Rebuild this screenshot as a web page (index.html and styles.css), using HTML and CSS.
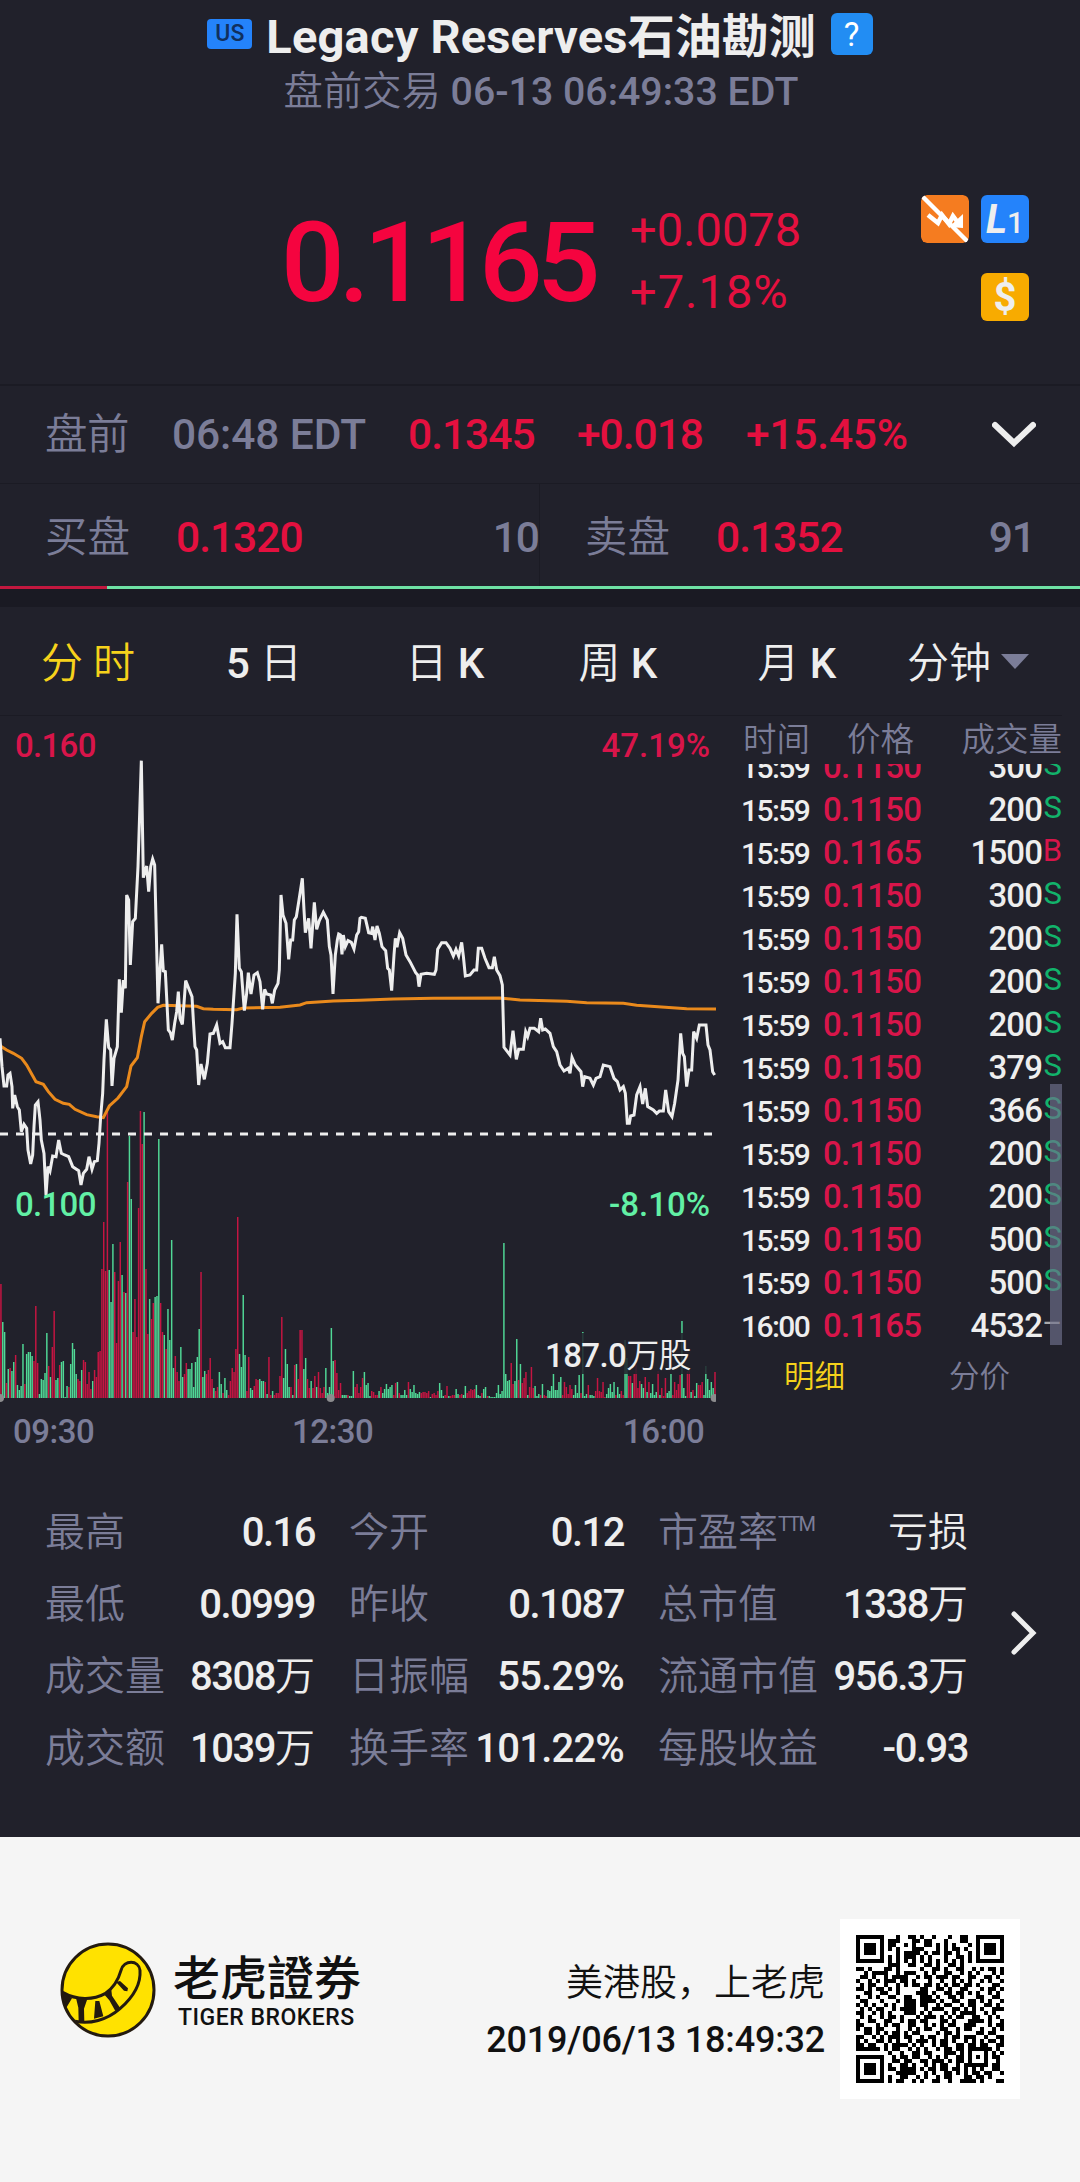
FILE: index.html
```html
<!DOCTYPE html>
<html lang="zh-CN">
<head>
  <meta charset="UTF-8">
  <meta name="viewport" content="width=device-width, initial-scale=1.0">
  <title>Legacy Reserves石油勘测</title>
  <link rel="stylesheet" href="styles.css">
</head>
<body>

  <header class="header">
    <div class="title-row">
      <span class="us-badge">US</span>
      <h1><span class="title-latin">Legacy Reserves</span>石油勘测</h1>
      <span class="help-badge">?</span>
    </div>
    <div class="subtitle"><span class="cn">盘前交易</span> 06-13 06:49:33 EDT</div>
  </header>

  <section class="quote">
    <div class="price">0.1165</div>
    <div class="change">
      <div>+0.0078</div>
      <div class="percent">+7.18%</div>
    </div>
    <div class="icons">
      <svg class="icon" viewBox="0 0 48 48">
        <rect width="48" height="48" rx="6" fill="#f57c20"/>
        <path d="M7 20l10 8 4-8 7 9 4-8 6 8" fill="none" stroke="#fff" stroke-width="4.5"/>
        <path d="M42 33V19L28 32z" fill="#fff"/>
        <path d="M2 2l44 44" stroke="#fff" stroke-width="4.5" stroke-linecap="round"/>
      </svg>
      <div class="icon level"><b>L</b>1</div>
      <div class="icon dollar">$</div>
    </div>
  </section>

  <section class="premarket">
    <span class="cn">盘前</span>
    <span class="clock">06:48 EDT</span>
    <span class="up">0.1345</span>
    <span class="up">+0.018</span>
    <span class="up percent">+15.45%</span>
    <svg class="chevron" viewBox="0 0 44 28"><path d="M3 4l19 18L41 4" fill="none" stroke="#eee" stroke-width="6" stroke-linecap="round"/></svg>
  </section>

  <section class="depth">
    <div class="side">
      <span class="side-label cn">买盘</span>
      <span class="up">0.1320</span>
      <span class="size">10</span>
    </div>
    <div class="side ask">
      <span class="side-label cn">卖盘</span>
      <span class="up">0.1352</span>
      <span class="size">91</span>
    </div>
  </section>
  <div class="ratio"><div class="ratio-bid"></div></div>

  <nav class="tabs cn">
    <span class="active">分 时</span>
    <span><b>5</b> 日</span>
    <span>日 <b>K</b></span>
    <span>周 <b>K</b></span>
    <span>月 <b>K</b></span>
    <span>分钟<i class="caret"></i></span>
  </nav>

  <section class="market">
    <div class="chart">
      <svg class="plot" viewBox="0 24 2148 2070" preserveAspectRatio="none">
        <g id="volumeBars"></g>
        <path class="dash" d="M0 1272H2148"/>
        <polyline class="average" points="0,1006 5,1010 20,1020 40,1030 65,1045 80,1065 108,1115 130,1123 145,1145 165,1168 190,1180 208,1183 225,1198 260,1214 290,1220 310,1223 328,1188 354,1164 380,1130 393,1068 412,1043 424,980 434,935 455,910 473,892 490,886 590,889 610,896 640,898 710,899 730,894 840,892 900,885 920,878 1000,873 1080,871 1180,867 1300,865 1500,864 1560,870 1700,874 1760,878 1870,880 1910,886 2060,896 2148,897"/>
        <polyline class="line" points="0,985 6,1070 12,1128 20,1128 24,1095 30,1090 36,1130 38,1195 44,1155 52,1190 58,1200 64,1265 72,1243 80,1255 84,1320 92,1362 98,1335 102,1250 106,1185 114,1175 120,1230 124,1290 132,1330 138,1455 144,1370 150,1383 158,1338 168,1340 176,1290 184,1330 194,1335 206,1340 218,1370 236,1382 243,1425 250,1390 260,1378 267,1340 276,1378 283,1355 292,1352 297,1300 302,1220 308,1150 312,1050 319,928 326,1012 332,1020 336,1128 342,1045 352,1010 358,808 364,908 370,810 376,835 380,555 386,570 391,765 398,635 406,625 414,470 424,152 430,503 440,468 446,545 452,470 458,447 464,465 474,880 480,780 485,703 490,783 496,785 505,960 511,968 517,990 524,940 530,905 535,845 540,925 547,943 552,880 557,812 564,830 576,860 580,930 585,1010 590,1020 596,1125 603,1062 613,1108 622,1060 630,972 640,970 650,945 660,1000 668,995 676,1013 690,1013 696,940 702,850 706,790 711,613 718,775 724,785 733,902 740,850 745,788 753,852 762,795 772,788 780,815 788,898 794,838 800,852 812,855 817,880 824,840 834,820 838,780 843,555 849,615 858,640 866,748 872,690 878,690 883,630 889,620 897,570 907,505 912,600 916,668 926,625 933,715 943,577 950,658 958,632 970,607 982,630 988,710 993,735 999,852 1006,735 1012,690 1016,672 1021,675 1026,733 1030,675 1036,710 1044,692 1054,697 1062,717 1070,675 1076,665 1080,625 1084,622 1096,625 1106,668 1114,670 1118,650 1125,690 1131,648 1138,670 1146,710 1157,722 1163,775 1168,780 1175,842 1182,735 1186,685 1191,712 1199,668 1208,685 1218,735 1230,755 1247,788 1253,795 1257,830 1263,793 1280,790 1303,793 1308,780 1313,718 1325,698 1338,698 1350,715 1360,738 1368,718 1376,738 1385,697 1390,738 1396,798 1410,795 1422,780 1430,780 1435,715 1445,715 1455,745 1467,773 1477,773 1483,740 1490,780 1500,797 1507,825 1512,1012 1530,1035 1539,962 1549,1048 1556,1018 1570,1018 1577,965 1583,980 1590,955 1603,955 1616,965 1622,925 1628,960 1636,957 1650,970 1660,1010 1670,1025 1680,1065 1692,1083 1705,1075 1710,1090 1716,1042 1726,1065 1743,1085 1748,1130 1754,1100 1770,1105 1780,1125 1788,1105 1800,1100 1810,1065 1830,1070 1842,1105 1852,1115 1860,1140 1870,1130 1876,1150 1882,1240 1888,1240 1892,1218 1902,1215 1910,1155 1920,1130 1928,1182 1936,1135 1943,1190 1960,1200 1970,1210 1978,1203 1990,1203 1997,1140 2006,1205 2016,1220 2024,1180 2034,1110 2042,970 2048,1030 2053,1040 2060,1130 2067,1080 2075,1080 2081,965 2090,985 2098,945 2118,945 2124,1005 2130,1020 2138,1085 2144,1095"/>
        <g fill="#8c8c8e">
          <circle cx="0" cy="2064" r="12"/>
          <circle cx="992" cy="2064" r="12"/>
          <circle cx="2144" cy="2064" r="12"/>
        </g>
      </svg>
      <span class="mark high">0.160</span>
      <span class="mark high right">47.19%</span>
      <span class="mark low">0.100</span>
      <span class="mark low right">-8.10%</span>
      <span class="volume-mark">187.0<span class="cn">万股</span></span>
      <div class="axis"><span>09:30</span><span>12:30</span><span>16:00</span></div>
    </div>

    <div class="trades">
      <div class="trades-head cn"><span>时间</span><span>价格</span><span>成交量</span></div>
      <div class="trades-list">
        <div id="tradeRows"></div>
        <div class="scrollbar"></div>
      </div>
      <div class="trades-tabs cn"><span class="active">明细</span><span>分价</span></div>
    </div>
  </section>

  <section class="stats">
    <dl>
      <div><dt>最高</dt><dd>0.16</dd></div>
      <div><dt>最低</dt><dd>0.0999</dd></div>
      <div><dt>成交量</dt><dd>8308<span class="cn">万</span></dd></div>
      <div><dt>成交额</dt><dd>1039<span class="cn">万</span></dd></div>
    </dl>
    <dl>
      <div><dt>今开</dt><dd>0.12</dd></div>
      <div><dt>昨收</dt><dd>0.1087</dd></div>
      <div><dt>日振幅</dt><dd class="percent">55.29%</dd></div>
      <div><dt>换手率</dt><dd class="percent">101.22%</dd></div>
    </dl>
    <dl>
      <div><dt>市盈率<sup>TTM</sup></dt><dd class="cn">亏损</dd></div>
      <div><dt>总市值</dt><dd>1338<span class="cn">万</span></dd></div>
      <div><dt>流通市值</dt><dd>956.3<span class="cn">万</span></dd></div>
      <div><dt>每股收益</dt><dd>-0.93</dd></div>
    </dl>
    <svg class="more" viewBox="0 0 28 46"><path d="M4 4l19 19L4 42" fill="none" stroke="#eee" stroke-width="5" stroke-linecap="round"/></svg>
  </section>

  <footer class="footer">
    <svg class="logo" viewBox="60 65 288 288">
      <circle cx="204" cy="209" r="138" fill="#ffe200" stroke="#231a10" stroke-width="9"/>
      <path d="M68 216C110 240 160 240 195 220C225 200 236 175 243 150C252 118 296 118 300 150C303 190 280 230 240 265C200 300 150 312 105 303" fill="none" stroke="#231a10" stroke-width="9"/>
      <path d="M66 212L96 234L78 264zM108 233L142 236L132 265L133 306L116 305L115 262zM166 242L178 242L190 288L162 295zM192 222L214 208L216 226L240 262L226 272L208 240zM228 185L240 182L264 204L262 213L252 211z" fill="#231a10"/>
    </svg>
    <div class="brand">
      <div class="brand-cn">老虎證券</div>
      <div class="brand-en">TIGER BROKERS</div>
    </div>
    <div class="slogan">
      <div class="cn">美港股，上老虎</div>
      <div class="date">2019/06/13 18:49:32</div>
    </div>
    <div class="qr"><svg id="qrCode" viewBox="0 0 37 37" shape-rendering="crispEdges"></svg></div>
  </footer>

  <script src="script.js"></script>
</body>
</html>
```
FILE: styles.css
```css
* {
  box-sizing: border-box;
}
body {
  margin: 0;
  width: 1080px;
  background: #21212b;
  color: #eeeeee;
  font-family: Roboto, "Noto Sans CJK SC", sans-serif;
  font-weight: 500;
}
.cn {
  font-family: Roboto, "Noto Sans CJK SC DemiLight", "Noto Sans CJK SC", sans-serif;
  font-weight: 350;
}
.up {
  color: #e4103f;
}
.header {
  height: 108px;
  text-align: center;
}
.title-row {
  height: 74px;
  display: flex;
  justify-content: center;
  align-items: center;
}
h1 {
  margin: 0 15px 0 14px;
  font-size: 47px;
  font-weight: 700;
  line-height: 74px;
  white-space: nowrap;
}
.title-latin {
  letter-spacing: 0.2px;
}
.us-badge {
  width: 45px;
  height: 30px;
  margin-bottom: 6px;
  border-radius: 4px;
  background: #2483fb;
  color: #10305f;
  font-size: 23px;
  line-height: 30px;
}
.help-badge {
  width: 42px;
  height: 42px;
  margin-bottom: 6px;
  border-radius: 6px;
  background: #228df3;
  color: #fff;
  font-size: 33px;
  font-weight: 400;
  line-height: 44px;
}
.subtitle {
  padding-left: 2px;
  font-size: 39.3px;
  line-height: 36px;
  color: #7b7d98;
}
.quote {
  height: 276px;
  padding: 87px 51px 0 281px;
  display: flex;
  align-items: flex-start;
}
.price {
  width: 349px;
  padding-top: 6px;
  font-size: 112px;
  line-height: 124px;
  letter-spacing: -6px;
  color: #f5043f;
}
.change {
  padding-top: 4px;
  font-size: 47px;
  font-weight: 400;
  line-height: 62px;
  color: #e4103f;
}
.change .percent {
  letter-spacing: 1px;
}
.icons {
  width: 108px;
  margin-left: auto;
  display: flex;
  flex-wrap: wrap;
  justify-content: flex-end;
  gap: 30px 12px;
}
.icon {
  width: 48px;
  height: 48px;
  border-radius: 6px;
  line-height: 50px;
  text-align: center;
}
.level {
  background: #2483fb;
  font-size: 30px;
}
.level b {
  font-size: 40px;
  font-style: italic;
}
.dollar {
  background: #f8ab00;
  font-size: 40px;
  font-weight: 700;
}
.premarket {
  height: 99px;
  padding: 0 44px 0 45px;
  border-top: 2px solid #1b1b24;
  display: grid;
  grid-template-columns: 127px 236px 169px 169px 1fr 44px;
  align-items: center;
  font-size: 42.5px;
  line-height: 98px;
  letter-spacing: -0.6px;
  color: #7b7d98;
}
.premarket .clock {
  letter-spacing: -0.1px;
}
.premarket .up,
.depth .up {
  letter-spacing: -1px;
}
.premarket .percent {
  letter-spacing: -0.2px;
}
.chevron {
  width: 44px;
  height: 28px;
}
.depth {
  height: 103px;
  border-top: 1px solid #1b1b24;
  display: grid;
  grid-template-columns: 540px 540px;
  grid-template-rows: 102px;
  font-size: 42.5px;
  line-height: 107px;
  color: #7b7d98;
}
.side {
  padding: 0 0 0 45px;
  display: flex;
  border-right: 1px solid #1b1b24;
}
.ask {
  padding-right: 45px;
  border-right: 0;
}
.side-label {
  width: 131px;
}
.size {
  margin-left: auto;
  letter-spacing: -1px;
}
.ratio {
  height: 21px;
  background: linear-gradient(#6fe2a5 0 3px, #1a1a23 3px);
}
.ratio-bid {
  width: 107px;
  height: 3px;
  background: #c2183f;
}
.tabs {
  width: 1062px;
  height: 109px;
  border-bottom: 1px solid #1b1b24;
  display: grid;
  grid-template-columns: 176px 176px 186px 160px 198px 144px;
  font-size: 42px;
  line-height: 114px;
  text-align: center;
}
.tabs b {
  font-weight: 500;
}
.active {
  color: #f6d21b;
}
.caret {
  display: inline-block;
  margin-left: 10px;
  border: 14px solid transparent;
  border-top: 15px solid #7b7d98;
  border-bottom: 0;
  vertical-align: 9px;
}
.market {
  height: 780px;
  display: flex;
}
.chart {
  width: 716px;
  position: relative;
  padding-top: 2px;
}
.plot {
  display: block;
  width: 716px;
  height: 690px;
}
.line,
.average,
.dash {
  fill: none;
  stroke: #eeeeee;
  stroke-width: 9;
}
.average {
  stroke: #ea8a1c;
}
.dash {
  stroke-dasharray: 24;
}
.mark,
.volume-mark,
.axis {
  font-size: 33px;
  line-height: 40px;
}
.mark {
  position: absolute;
  left: 15px;
  letter-spacing: -0.7px;
}
.mark.right {
  left: auto;
  right: 6px;
  letter-spacing: 0;
}
.high {
  top: 10px;
  color: #d8154a;
}
.low {
  top: 469px;
  color: #62f0a5;
}
.volume-mark {
  position: absolute;
  right: 6px;
  top: 617px;
  width: 170px;
  padding-left: 5px;
  line-height: 46px;
  height: 41px;
  letter-spacing: -0.6px;
  background: rgba(33, 33, 43, 0.85);
}
.axis {
  padding: 4px 0 0 13px;
  display: grid;
  grid-template-columns: 279px 331px 1fr;
  letter-spacing: -0.5px;
  color: #7b7d98;
}
.trades {
  width: 346px;
  padding-left: 26px;
}
.trades-head {
  height: 48px;
  display: grid;
  grid-template-columns: 105px 1fr auto;
  font-size: 33.5px;
  line-height: 48px;
  color: #7b7d98;
}
.trades-head span:first-child {
  padding-left: 1px;
}
.trades-list {
  height: 581px;
  position: relative;
  display: flex;
  align-items: flex-end;
  overflow: hidden;
}
.trade {
  width: 320px;
  height: 43px;
  display: grid;
  grid-template-columns: 81px 105px 1fr 20px;
  font-size: 33px;
  line-height: 48px;
}
.trade .time {
  margin-left: -1px;
  font-size: 30px;
  line-height: 49px;
  letter-spacing: -1.6px;
}
.trade .trade-price {
  color: #d8154a;
  letter-spacing: -0.8px;
}
.trade .amount {
  text-align: right;
  letter-spacing: -0.9px;
}
.trade .flag {
  font-size: 31px;
  font-weight: 400;
  line-height: 44px;
  text-align: right;
  color: #12b36b;
}
.trade .buy {
  color: #d8154a;
}
.trade .none {
  color: #aaaaaa;
}
.scrollbar {
  position: absolute;
  right: 0;
  bottom: 0;
  width: 12px;
  height: 261px;
  background: rgba(112, 114, 142, 0.65);
}
.trades-tabs {
  padding: 0 52px 0 42px;
  display: flex;
  justify-content: space-between;
  font-size: 30.5px;
  line-height: 64px;
  color: #7b7d98;
}
.trades-tabs .active {
  color: #f6d21b;
}
.stats {
  height: 341px;
  padding: 1px 0 0 45px;
  display: grid;
  grid-template-columns: 270px 275px 310px 28px;
  column-gap: 34px;
  font-size: 40px;
  line-height: 72px;
}
.stats dl {
  margin: 0;
}
.stats dl > div {
  display: flex;
  justify-content: space-between;
  white-space: nowrap;
}
.stats dt {
  font-family: Roboto, "Noto Sans CJK SC DemiLight", "Noto Sans CJK SC", sans-serif;
  font-weight: 350;
  color: #7b7d98;
}
.stats dd {
  margin: 0;
  letter-spacing: -1.5px;
}
.stats .percent {
  letter-spacing: -0.8px;
}
.stats dd.cn,
.stats dd .cn {
  font-weight: 400;
  letter-spacing: 0;
}
.stats sup {
  font-size: 20px;
  font-weight: 400;
  letter-spacing: -1.8px;
  line-height: 0;
  vertical-align: 15px;
}
.more {
  width: 28px;
  height: 46px;
  margin: 113px 0 0 8px;
}
.footer {
  height: 345px;
  padding: 82px 60px 0 60px;
  display: flex;
  background: #f5f5f5;
  color: #111;
}
.logo {
  width: 96px;
  height: 96px;
  margin-top: 23px;
}
.brand {
  margin: 29px 0 0 17px;
}
.brand-cn {
  font-family: "Noto Sans CJK TC", sans-serif;
  font-size: 47px;
  line-height: 54px;
}
.brand-en {
  padding-left: 5px;
  font-size: 23px;
  line-height: 31px;
  letter-spacing: 0.5px;
}
.slogan {
  margin: 36px 15px 0 auto;
  font-size: 37px;
  line-height: 57px;
  text-align: right;
}
.date {
  font-size: 36px;
  letter-spacing: -0.2px;
}
.qr {
  width: 180px;
  height: 180px;
  padding: 16px;
  background: #fff;
}
.qr svg {
  display: block;
}
```
FILE: script.js
```js
// One entry per minute: r = up, g = down, then the bar height
const volume = `r114 g76 g66 r15 g29 r30 g27 g36 r43 g13 g8 g12 g54 r14 g44 g46 g46 g42 r37 r92
r35 g4 g19 g18 g25 g65 r32 g21 r51 r87 g18 g20 r33 g36 g37 g1 g12 r11 g34 g55
g49 g24 r19 r17 g28 r38 r36 r14 r26 r9 g17 r28 r21 r46 r47 r129 r176 r127 r286 g128
g96 g154 r126 r55 r117 r156 g123 r106 g105 r216 g262 g199 r66 r99 r61 r190 r287 r254 g286 r129
r64 g99 r79 r95 g101 g102 g259 r95 r66 g63 r49 g89 g58 g158 g30 r42 r26 r17 g51 g21
r24 r35 g29 g29 g35 g11 g36 g41 g69 r126 g21 g27 r24 r28 r40 r19 g10 r7 r11 g26
g14 r5 g20 g8 r3 r17 r30 r26 r49 r181 g44 g31 g103 g43 r7 r41 g10 g8 r12 r19
r18 g19 g17 g17 r16 g4 r41 r3 g7 r3 r5 r5 r22 r81 g20 g49 g34 g11 r11 g3
r33 g34 r19 r68 r68 g29 g40 r19 r10 g17 r10 r22 g11 r26 r10 r5 r11 g30 g5 g11
g70 g37 r38 r25 r8 r15 g3 g3 g3 r3 g2 g2 g27 r11 r14 r5 r11 r20 g26 g13
g15 g2 r7 r6 r3 r3 g7 r11 g5 g9 g14 g9 g11 g13 r3 r15 g16 r5 g3 g3
g8 g3 r16 g9 g6 g13 g5 g4 g6 r5 r6 r6 r5 r7 g1 r4 r5 r3 r7 g15
g8 g2 r3 r12 g2 r2 r3 r3 g9 g4 r3 r4 g3 g12 r5 r7 r9 r8 r9 g13
g3 g2 r5 g9 g11 r2 g2 g1 g1 g1 g5 g13 g4 g7 g155 g24 g17 g18 r35 r14
g17 g59 r18 g34 r15 r20 r26 g3 r11 r31 r10 g12 g2 g4 r3 g14 r3 r2 g8 g7
g12 g24 g8 g8 g16 g21 r3 r16 r11 r4 r13 r9 g3 g13 g5 g23 r5 g66 g2 g4
r13 g3 g3 g2 r7 r20 r7 r6 r16 r1 g4 g10 g14 g6 g16 r3 g11 g4 r7 r3
g58 g40 r22 r22 g15 r24 r33 r10 r17 g14 g10 r21 g6 r16 g5 g14 g3 g6 r27 g3
r10 r2 r20 g5 g7 g24 r3 r16 r8 r14 r23 g77 g10 g2 r27 r27 g6 r8 g2 g15
r13 r13 r16 g3 g32 g19 g8 g16 g10 r26`.split(/\s+/);

document.getElementById('volumeBars').innerHTML = volume.map((bar, i) => {
  const h = bar.slice(1) * 3;
  const color = bar[0] === 'r' ? '#c51542' : '#50d896';
  return `<rect x="${(i * 5.507 + 0.6).toFixed(1)}" y="${2064 - h}" width="4.4" height="${h}" fill="${color}"/>`;
}).join('');

const trades = [
  ['15:59', '0.1150', 300, 'S'],
  ['15:59', '0.1150', 200, 'S'],
  ['15:59', '0.1165', 1500, 'B'],
  ['15:59', '0.1150', 300, 'S'],
  ['15:59', '0.1150', 200, 'S'],
  ['15:59', '0.1150', 200, 'S'],
  ['15:59', '0.1150', 200, 'S'],
  ['15:59', '0.1150', 379, 'S'],
  ['15:59', '0.1150', 366, 'S'],
  ['15:59', '0.1150', 200, 'S'],
  ['15:59', '0.1150', 200, 'S'],
  ['15:59', '0.1150', 500, 'S'],
  ['15:59', '0.1150', 500, 'S'],
  ['16:00', '0.1165', 4532, '–']
];
const flagClass = { S: '', B: 'buy', '–': 'none' };

document.getElementById('tradeRows').innerHTML = trades.map(([time, price, amount, flag]) => `
  <div class="trade">
    <span class="time">${time}</span>
    <span class="trade-price">${price}</span>
    <span class="amount">${amount}</span>
    <span class="flag ${flagClass[flag]}">${flag}</span>
  </div>`).join('');

const qr = [
  '#######...#..##.#..#...#..##..#######',
  '#.....#.###...##.##...#...##..#.....#',
  '#.###.#.##..#.#..##.#.#.#...#.#.###.#',
  '#.###.#.#.#...###...#.#.##.#..#.###.#',
  '#.###.#...#.####.#.##.##.#..#.#.###.#',
  '#.....#.#.#.###.#.#...#..##.#.#.....#',
  '#######.#.#.#.#.#.#.#.#.#.#.#.#######',
  '........###..##..##.#..##.#..........',
  '##.#...##.#.....#..##.#..##..#.#.##.#',
  '..#.####..#.###..#.#..##..#.#.#...#.#',
  '.##.#..#.####..#.##.###.##..##..##.#.',
  '#..#.#.###.##.#...#..#..#.#.#..#.#..#',
  '.#.##..#..#.#.##.##.#.#.##.##.#...##.',
  '##.#.##.#.#.....##..##.#..##...#.##.#',
  '..##..##..#....###.#..##.##.#.#..#.#.',
  '#..#.#..##..##..###.#..##.#...##..##.',
  '.##...#...#.###.####.#..##..##.#.#..#',
  '#.#.#..#.#..###.##..#.##..#.##..##.#.',
  '.#.#.##..#.####..#.###..##.#.#.#..###',
  '##..#.#.#...###.#.#...#.#.####..#.#..',
  '.#.#..#.##.#...#.###.#.#.##..##..#.#.',
  '#..##..##..#.##.##...##.#...####.#..#',
  '##...#.#.##..##..#.#.#.##..###...#.##',
  '#.##.##...#..#.#.##..##..#.##..#..#.#',
  '..##.#.#.##.#.##....#.##.#....##.##..',
  '##..#.#.###.##..#.##..#.##.###..#..##',
  '#.#..##.#.#..#.###.#.##.#..#.#.#.##.#',
  '##.##..#.####.#.#..#.##..##.##.##..##',
  '######.#.##..#.#.#..#.##.##.######.#.',
  '........#..#..##.##...###.#.#...#.#.#',
  '#######..#.##.##..#.#.#..##.#.#.#.##.',
  '#.....#..##.##..##.###.#.##.#...#..#.',
  '#.###.#.#..##.#..#.#.##..#.######.##.',
  '#.###.#.##.####.#.##.##.##.#.#.#..##.#',
  '#.###.#...#####..#.#..##.#.#.##.##..#',
  '#.....#.#..##..#.#..#.##...##.##.#...',
  '#######.#.##..#.#..##..#..####.#...##'
];
document.getElementById('qrCode').innerHTML = qr.map((row, y) =>
  [...row].map((c, x) => c === '#' ? `<rect x="${x}" y="${y}" width="1" height="1"/>` : '').join('')
).join('');
```
